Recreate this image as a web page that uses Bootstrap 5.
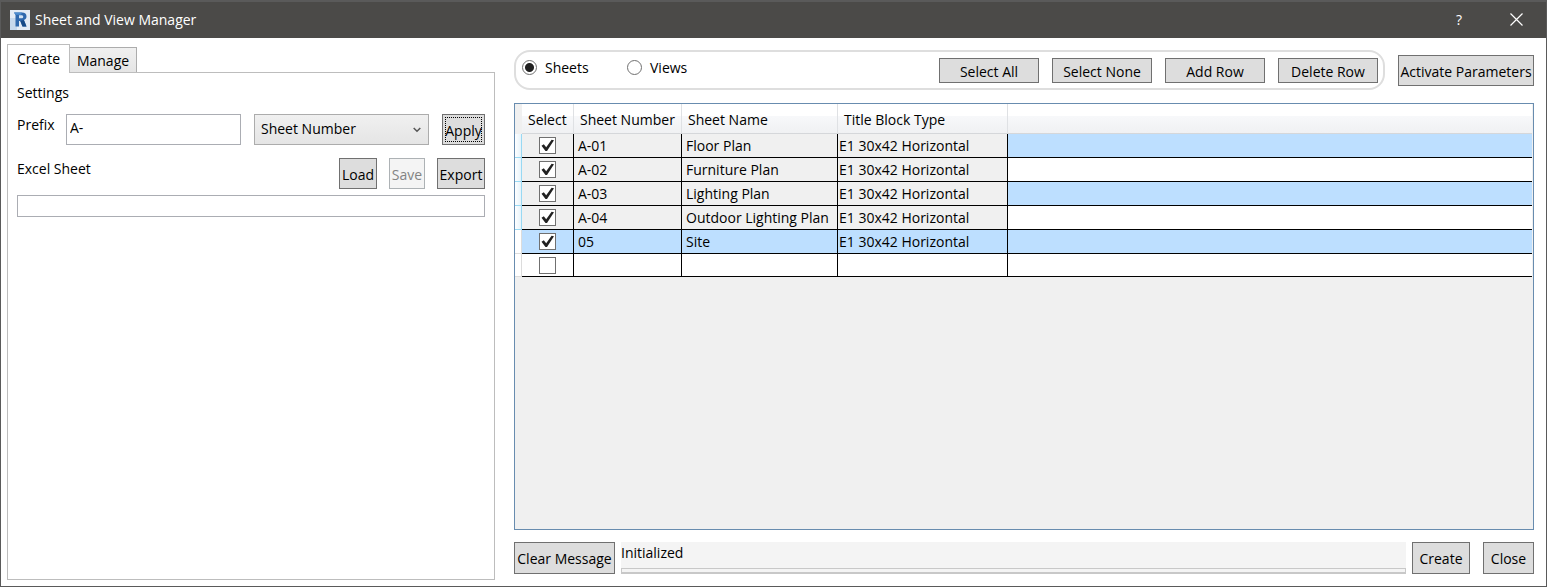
<!DOCTYPE html>
<html lang="en">
<head>
<meta charset="utf-8">
<meta name="viewport" content="width=device-width, initial-scale=1">
<title>Sheet and View Manager</title>
<link href="https://cdn.jsdelivr.net/npm/bootstrap@5.3.0/dist/css/bootstrap.min.css" rel="stylesheet">
<style>
  body { font-family: "Open Sans", "Noto Sans", sans-serif; font-size: 14px; line-height: 20px; color: #000; background: #fff; }
  .app-window { border: 1px solid #5a5a5a; border-top: 0; }
  .title-bar { height: 38px; background: #4b4a48; border-top: 2px solid #5a5a5a; color: #fff; padding: 0 4px 1px 9px; gap: 5px; }
  .title-bar button { color: #fff; background: none; border: 0; width: 52px; height: 34px; padding: 0; }
  .title-bar button svg { display: block; margin: 0 auto; }
  .work-area { padding: 6px 12px 6px 6px; gap: 19px; }
  .side-panel { flex: 0 0 488px; }
  .side-panel .nav-tabs { border: 0; align-items: flex-end; height: 28px; }
  .side-panel .nav-link { border: 1px solid #acacac; border-bottom: 0; border-radius: 0; color: #000; padding: 1px 5px 0; min-width: 63px; height: 25px; margin: 0; line-height: 20px; background: linear-gradient(#f0f0f0, #e5e5e5); }
  .side-panel .nav-link.active { background: #fff; color: #000; height: 29px; padding-bottom: 2px; margin-bottom: -1px; position: relative; border-color: #bdbdbd; }
  .side-panel .nav-item + .nav-item .nav-link { margin-left: -1px; min-width: 68px; }
  .side-body { border: 1px solid #bdbdbd; padding: 10px 9px; }
  .prefix-row { margin-top: 11px; }
  .excel-row { margin-top: 13px; gap: 12px; }
  .prefix-row label, .excel-row label { padding-top: 1px; }
  .tool-btn { background: #ddd; border: 1px solid #707070; border-radius: 0; color: #000; font-size: 14px; line-height: 20px; height: 31px; padding: 3px 0 0; white-space: nowrap; }
  .tool-btn:hover { background: #bee6fd; }
  .tool-btn:disabled { background: #f4f4f4; border-color: #adb2b5; color: #838383; opacity: 1; }
  .btn-short { height: 25px; width: 100px; }
  .btn-apply { width: 43px; padding-top: 2px; }
  .btn-apply.is-focused { outline: 1px dotted #000; outline-offset: -4px; }
  .btn-load { width: 38px; }
  .btn-save { width: 36px; }
  .btn-export { width: 48px; }
  .btn-activate { width: 136px; }
  .btn-clear { width: 101px; }
  .btn-create { width: 58px; }
  .btn-close-window { width: 51px; }
  .btn-foot { height: 32px; padding-top: 1px; }
  .field, .field:focus { border: 1px solid #abadb3; border-radius: 0; box-shadow: none; color: #000; font-size: 14px; line-height: 20px; }
  .field-prefix { width: 175px; height: 31px; padding: 0 3px 5px; }
  .field-path { height: 22px; padding: 0 3px; margin-top: 6px; }
  .pick { width: 175px; height: 31px; margin: 0 13px; padding: 0 24px 1px 6px; border: 1px solid #acacac; border-radius: 0; font-size: 14px; line-height: 20px; color: #000; background-color: #e9e9e9;
    background-image: url("data:image/svg+xml,%3Csvg xmlns='http://www.w3.org/2000/svg' viewBox='0 0 8 6'%3E%3Cpath d='M.7 1 4 4.300 7.300 1' fill='none' stroke='%23555' stroke-width='1.500'/%3E%3C/svg%3E"), linear-gradient(#f0f0f0, #e5e5e5);
    background-size: 8px 6px, 100% 100%; background-position: right 7px center, 0 0; background-repeat: no-repeat; }
  .right-pane { min-width: 0; padding: 6px 0; }
  .top-bar, .button-row { gap: 13px; }
  .mode-box { border: 2px solid #dedede; border-radius: 16px; height: 40px; padding: 0 5px 0 6px; }
  .mode-box .form-check { min-height: 0; padding: 0 0 5px; gap: 8px; margin: 0; }
  .mode-box .form-check-input { float: none; width: 15px; height: 15px; margin: 0; border: 1px solid #707070; background-color: #fff; box-shadow: none; }
  .mode-box .form-check-input:checked { background-image: radial-gradient(circle, #212121 0 4px, transparent 5px); }
  .sheets-radio { width: 105px; }
  .grid-frame { border: 1px solid #688caf; background: #f0f0f0; padding-right: 1px; margin: 13px 0 12px; overflow: auto; }
  .sheet-grid { width: 100%; table-layout: fixed; border-collapse: separate; border-spacing: 0; white-space: nowrap; }
  .sheet-grid thead th { height: 30px; padding: 2px 0 0 6px; font-weight: 400; border-right: 1px solid #dfe1e4; border-bottom: 1px solid #d5d7da; background: linear-gradient(#fff 0 42%, #f7f8fa 43%, #f0f1f3); }
  .sheet-grid thead th:first-child { background: #f0f0f0; border: 0; }
  .sheet-grid thead th:last-child { border-right: 0; }
  .sheet-grid td { height: 24px; padding: 1px 0 0 4px; border-right: 1px solid #000; border-bottom: 1px solid #000; background: #f0f0f0; line-height: 20px; }
  .sheet-grid td:nth-child(5) { padding-left: 1px; }
  .sheet-grid td:last-child { border-right: 0; background: #fff; }
  .sheet-grid td:nth-child(2) { padding: 0; text-align: center; }
  .sheet-grid tr:nth-child(odd) td:last-child, .sheet-grid .row-picked td { background: #bddfff; }
  .sheet-grid .row-empty td { background: #fff; height: 23px; }
  .sheet-grid tbody tr td:first-child { padding: 0; background: linear-gradient(90deg, #fff, #e6f3fb); border-color: #99d9f3; }
  .sheet-grid .row-picked td:first-child, .sheet-grid .row-empty td:first-child { background: #fff !important; border-color: #dcdcdc !important; }
  .tick { display: block; margin: 0 auto; width: 17px; height: 17px; border: 1px solid #707070; background: #fff; appearance: none; }
  .tick:checked { background: #fff url("data:image/svg+xml,%3Csvg xmlns='http://www.w3.org/2000/svg' viewBox='0 0 15 15'%3E%3Cpath d='M1.500 7.700 3.800 6.200 6.200 9.200 11.600 1.800 14 2.200 7 13 5.500 13Z' fill='%23212121'/%3E%3C/svg%3E") center / 15px 15px no-repeat; }
  .status-group { gap: 6px; min-width: 0; }
  .foot-bar { gap: 13px; }
  .status-box { background: #f4f4f4; min-width: 0; padding-top: 1px; }
  .status-line { height: 6px; border: 1px solid #c8c8c8; border-bottom-width: 2px; border-radius: 0; background: #f4f4f4; }
</style>
</head>
<body>
<div class="app-window d-flex flex-column min-vh-100">
  <header class="title-bar d-flex align-items-center">
    <svg width="20" height="20" viewBox="0 0 20 20" aria-hidden="true">
      <rect width="20" height="20" fill="#e3ebf5"/>
      <path d="M0 8h7v12H0z" fill="#c6d8ec"/>
      <path d="M4 2.500h8c3 0 4.500 1.500 4.500 3.900 0 1.800-1 3-2.600 3.600L16.500 16.500h-4L10.300 11H9v5.500H5.500V5z" fill="#2f68ad"/>
      <path d="M4 2.500h8l-1 2.300H5.500z" fill="#4c8bce"/>
      <path d="M9 5.200h2.300c1.300 0 1.900.5 1.900 1.500s-.6 1.500-1.900 1.500H9z" fill="#d2e2f3"/>
      <path d="M10.300 11 13.900 10l2.600 6.500h-4z" fill="#174a87"/>
    </svg>
    <span>Sheet and View Manager</span>
    <button type="button" class="ms-auto" aria-label="Help">?</button>
    <button type="button" aria-label="Close window">
      <svg width="13" height="13" viewBox="0 0 13 13"><path d="M.5.5l12 12M12.500.5l-12 12" stroke="#fff" stroke-width="1.200"/></svg>
    </button>
  </header>

  <main class="work-area d-flex flex-grow-1">
    <section class="side-panel d-flex flex-column">
      <ul class="nav nav-tabs">
        <li class="nav-item"><button type="button" class="nav-link active">Create</button></li>
        <li class="nav-item"><button type="button" class="nav-link">Manage</button></li>
      </ul>
      <div class="side-body flex-grow-1">
        <div>Settings</div>
        <div class="prefix-row d-flex">
          <label for="prefix" class="me-auto">Prefix</label>
          <input id="prefix" type="text" class="form-control field field-prefix" value="A-">
          <select class="form-select pick" aria-label="Apply prefix to"><option>Sheet Number</option></select>
          <button type="button" class="btn tool-btn btn-apply is-focused">Apply</button>
        </div>
        <div class="excel-row d-flex">
          <label for="excel" class="me-auto">Excel Sheet</label>
          <button type="button" class="btn tool-btn btn-load">Load</button>
          <button type="button" class="btn tool-btn btn-save" disabled>Save</button>
          <button type="button" class="btn tool-btn btn-export">Export</button>
        </div>
        <input id="excel" type="text" class="form-control field field-path">
      </div>
    </section>

    <section class="right-pane d-flex flex-column flex-grow-1">
      <div class="top-bar d-flex align-items-center">
        <div class="mode-box d-flex align-items-center flex-grow-1">
          <div class="form-check d-flex align-items-center sheets-radio">
            <input class="form-check-input" type="radio" name="mode" id="sheets" checked><label for="sheets">Sheets</label>
          </div>
          <div class="form-check d-flex align-items-center">
            <input class="form-check-input" type="radio" name="mode" id="views"><label for="views">Views</label>
          </div>
          <div class="button-row d-flex ms-auto">
            <button type="button" class="btn tool-btn btn-short">Select All</button>
            <button type="button" class="btn tool-btn btn-short">Select None</button>
            <button type="button" class="btn tool-btn btn-short">Add Row</button>
            <button type="button" class="btn tool-btn btn-short">Delete Row</button>
          </div>
        </div>
        <button type="button" class="btn tool-btn btn-activate flex-shrink-0">Activate Parameters</button>
      </div>

      <div class="grid-frame flex-grow-1">
        <table class="sheet-grid">
          <colgroup><col style="width:7px"><col style="width:52px"><col style="width:108px"><col style="width:156px"><col style="width:170px"><col></colgroup>
          <thead><tr><th></th><th>Select</th><th>Sheet Number</th><th>Sheet Name</th><th>Title Block Type</th><th></th></tr></thead>
          <tbody>
            <tr><td></td><td><input class="tick" type="checkbox" aria-label="Select A-01" checked></td><td>A-01</td><td>Floor Plan</td><td>E1 30x42 Horizontal</td><td></td></tr>
            <tr><td></td><td><input class="tick" type="checkbox" aria-label="Select A-02" checked></td><td>A-02</td><td>Furniture Plan</td><td>E1 30x42 Horizontal</td><td></td></tr>
            <tr><td></td><td><input class="tick" type="checkbox" aria-label="Select A-03" checked></td><td>A-03</td><td>Lighting Plan</td><td>E1 30x42 Horizontal</td><td></td></tr>
            <tr><td></td><td><input class="tick" type="checkbox" aria-label="Select A-04" checked></td><td>A-04</td><td>Outdoor Lighting Plan</td><td>E1 30x42 Horizontal</td><td></td></tr>
            <tr class="row-picked"><td></td><td><input class="tick" type="checkbox" aria-label="Select 05" checked></td><td>05</td><td>Site</td><td>E1 30x42 Horizontal</td><td></td></tr>
            <tr class="row-empty"><td></td><td><input class="tick" type="checkbox" aria-label="Select new row"></td><td></td><td></td><td></td><td></td></tr>
          </tbody>
        </table>
      </div>

      <footer class="foot-bar d-flex">
        <div class="status-group d-flex flex-grow-1">
          <button type="button" class="btn tool-btn btn-foot btn-clear">Clear Message</button>
          <div class="status-box d-flex flex-column flex-grow-1">
            <div>Initialized</div>
            <div class="progress status-line mt-auto" role="progressbar" aria-label="Progress" aria-valuenow="0" aria-valuemin="0" aria-valuemax="100"></div>
          </div>
          <button type="button" class="btn tool-btn btn-foot btn-create">Create</button>
        </div>
        <button type="button" class="btn tool-btn btn-foot btn-close-window">Close</button>
      </footer>
    </section>
  </main>
</div>
<script src="https://cdn.jsdelivr.net/npm/bootstrap@5.3.0/dist/js/bootstrap.bundle.min.js"></script>
</body>
</html>
